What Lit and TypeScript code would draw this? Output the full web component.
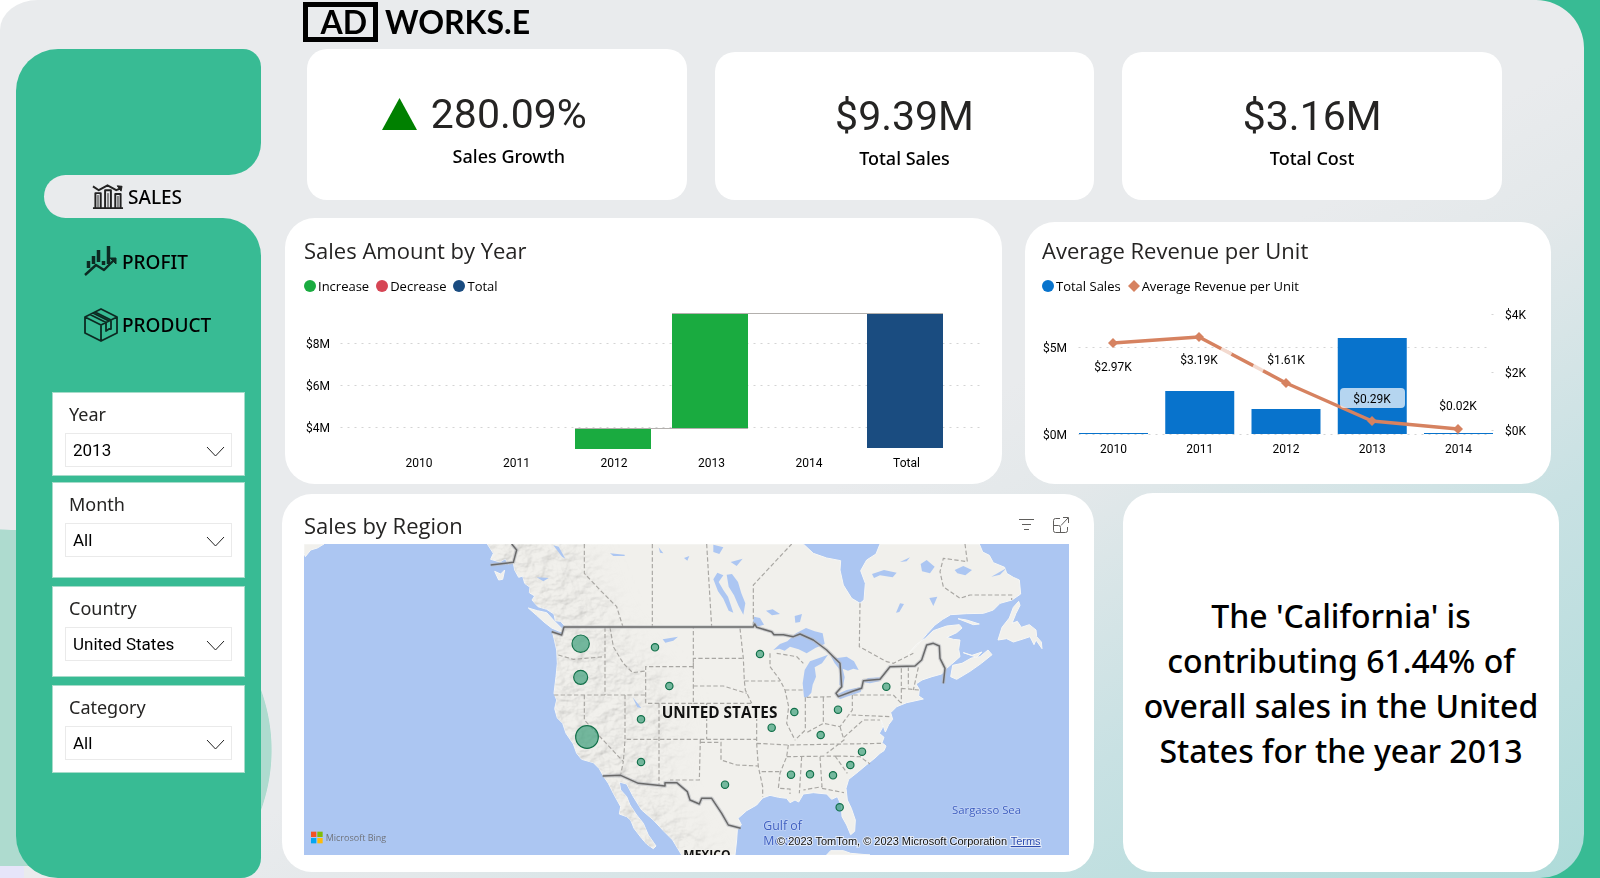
import { LitElement, html, svg, css } from "lit";
import { customElement } from "lit/decorators.js";
import { classMap } from "lit/directives/class-map.js";

type Filter = { id: string; label: string; size: string; options: string[] };

const FILTERS: Filter[] = [
  { id: "year", label: "Year", size: "compact", options: ["2013", "2010", "2011", "2012", "2014"] },
  { id: "month", label: "Month", size: "tall", options: ["All", "January", "February", "March"] },
  { id: "country", label: "Country", size: "regular", options: ["United States", "Canada", "France"] },
  { id: "category", label: "Category", size: "short", options: ["All", "Bikes", "Clothing"] },
];

const NAV_ICONS = {
  sales: svg`
    <path d="M1 25.500h31M3.500 25V10h5.500v15M13.500 25V7h6v18M24 25V11h5.500v14" stroke-width="2"/>
    <path d="M6.200 12v13M16.500 10v15M26.800 13v12" stroke-width="1"/>
    <path d="M1 3l6 4 9-5 9 5 5-2" stroke-width="2"/>
    <path d="M26 2.500l5 .500-1 5z" fill="#222" stroke-width="1"/>`,
  profit: svg`
    <path d="M4.500 16v7M9.500 11v8M14.500 5v12M19.500 16v4M24.500 1v18" stroke-width="3.500"/>
    <path d="M1 30l11-10 8 5 11-11" stroke-width="2.400"/>
    <path d="M26 13h6v6z" fill="#0c2a22" stroke-width="1"/>`,
  product: svg`
    <path d="M17 1l16 8v16l-16 8-16-8V9zM1 9l16 8 16-8M17 17v16M6 6.500l16 8M11 4l16 8M9 5l16 8" stroke-width="1.800"/>
    <path d="M22 15v8l3-2 2 0v-8.500" stroke-width="1.800"/>`,
};

const DOTS: [number, number, number][] = [
  [902, 461, 26], [902, 562, 21], [921, 741, 34], [1125, 472, 11], [1168, 588, 11],
  [1083, 688, 11], [1083, 816, 11], [1440, 492, 11], [1543, 666, 11], [1674, 659, 11],
  [1819, 590, 11], [1475, 713, 11], [1622, 735, 11], [1746, 785, 11], [1711, 825, 11],
  [1533, 854, 11], [1590, 853, 11], [1659, 856, 11], [1335, 884, 11], [1679, 952, 11],
];

const LAND =
  "M622 162L640 190L632 208L660 216L676 206L684 222L700 218L704 240L716 262L728 258L734 280L750 292L748 308L764 318L756 330L774 350L800 358L822 372L826 392L842 394L856 410L846 435L818 428L822 445L830 480L832 520L828 560L822 610L830 630L824 656L832 684L848 700L858 730L880 762L890 790L905 808L940 818L958 836L970 858L985 880L1000 910L1022 950L1018 972L1040 980L1052 990L1062 1015L1085 1045L1100 1062L1120 1076L1128 1068L1105 1035L1090 1000L1070 975L1050 945L1040 920L1022 900L1018 876L1040 882L1060 920L1085 960L1120 990L1150 1022L1178 1050L1205 1095H1365L1370 1050L1372 1020L1384 1004L1374 985L1400 962L1430 945L1448 924L1470 916L1496 922L1520 925L1530 938L1545 930L1556 936L1570 912L1600 908L1640 912L1655 928L1672 920L1684 946L1686 980L1700 1005L1712 1034L1724 1024L1726 990L1714 955L1702 930L1698 895L1706 868L1735 845L1760 824L1785 804L1800 790L1812 782L1818 768L1806 758L1812 742L1798 730L1808 712L1804 690L1816 726L1826 704L1838 688L1832 668L1850 650L1880 638L1930 627L1916 618L1918 598L1908 582L1926 570L1956 560L1985 552L2000 535L2015 522L2040 500L2036 478L2040 450L2020 448L2000 442L2030 428L2046 414L2038 404L2000 408L1960 422L1935 446L1910 462L1884 492L1912 466L1942 430L1964 406L1988 388L2012 374L2060 371L2110 370L2140 360L2160 340L2196 330L2222 312L2218 270L2200 262L2180 250L2174 232L2140 218L2128 196L2108 186L2098 162H1800L1788 192L1760 210L1742 242L1756 280L1752 330L1740 340L1715 325L1690 285L1680 240L1682 212L1640 204L1600 190L1570 162Z";

const ISLANDS =
  "M745 354L772 362L800 368L820 390L844 414L850 426L838 424L815 414L792 396L770 376ZM644 244L662 252L674 240L668 268L656 270ZM2216 334L2200 352L2188 384L2166 412L2154 450L2180 446L2200 456L2226 448L2250 440L2262 464L2268 450L2286 476L2284 456L2270 440L2268 420L2248 404L2224 412L2212 394L2196 400L2208 370L2220 346ZM2018 526L2046 520L2074 504L2100 500L2124 480L2136 494L2104 520L2070 544L2030 568L2012 560ZM2034 386L2060 390L2098 402L2080 404ZM2050 488L2076 496L2106 486L2090 502ZM1640 1095L1652 1082L1690 1082L1712 1090L1770 1095ZM72 162H132L112 174L92 180L76 200L72 190Z";

const LAKES =
  "M1480 480L1500 462L1522 454L1548 430L1578 414L1604 424L1628 430L1634 462L1606 474L1580 490L1556 478L1530 470L1514 482L1498 476ZM1572 622L1568 580L1574 540L1590 514L1628 500L1644 494L1626 520L1604 532L1608 560L1598 584L1594 608L1582 622ZM1652 498L1672 504L1700 500L1722 514L1736 540L1720 536L1704 542L1688 536L1694 562L1688 594L1678 584L1680 540L1664 520ZM1668 614L1700 600L1746 590L1742 606L1700 620L1680 628ZM1748 576L1764 564L1802 562L1798 574L1770 580ZM1300 268L1312 248L1330 256L1316 276L1330 300L1344 320L1360 368L1346 362L1330 326L1314 304ZM1340 254L1356 252L1374 276L1384 310L1396 340L1390 374L1376 348L1362 316L1346 290ZM1422 380L1440 384L1452 404L1430 410L1418 402ZM1300 164L1330 172L1318 192L1300 186ZM1352 216L1388 206L1370 228ZM1458 362L1478 358L1500 372L1476 376ZM1544 378L1566 372L1560 396L1546 398ZM1776 252L1812 240L1850 248L1838 262L1800 256L1782 264ZM1860 216L1890 202L1880 214ZM1922 222L1940 210L1964 230L1950 250L1926 244ZM2024 240L2050 228L2076 240L2056 256L2032 250ZM1848 368L1860 340L1872 342L1858 366ZM2134 260L2180 234L2160 254ZM1948 324L1972 320L1960 348ZM1058 622L1084 654L1072 652ZM990 190L1034 194L1034 198L1000 198ZM1212 204L1228 198L1222 212ZM820 166L836 170L856 206L846 200ZM770 262L806 264L790 274ZM1136 172L1150 190L1140 188ZM1148 448L1194 440L1180 452L1156 458Z";

const STATES =
  "M913 162V250L960 300L1010 350L1028 408M1117 162V410M1280 162L1295 410M1420 408V285L1535 162M1740 340L1738 470L1820 515L1840 520L1900 490M2055 162L2062 215L1990 205L1980 245L1990 290L2040 325L2070 315H2195V330M975 412V615M835 495L880 508L975 500M822 615H1097M1240 530H1097V640H1240V412M990 412L1000 470L1030 520L1058 548L1097 543M913 615V690L1030 815L1022 855M1035 615V750L1030 815M1137 640V885M1040 748H1430M1261 748L1258 870H1170M1262 757H1323V810L1370 825L1435 828M1240 530V505H1387M1240 588H1330L1400 610M1380 415L1390 505L1393 573L1396 600L1415 640M1240 640H1280V748M1280 640H1415M1430 660V760L1435 830L1448 890V920M1393 573H1500M1430 760L1525 765L1810 760M1445 845H1500M1525 765L1520 800L1500 850L1495 895L1530 897V912M1520 800L1670 798M1565 800L1558 910M1620 800L1626 890L1570 900M1626 895L1692 908M1665 798L1702 850M1470 490V530L1500 570L1515 600L1526 650L1520 700L1545 750M1515 600H1570M1576 622V720L1545 750M1630 622V700L1576 730M1580 622L1660 620M1717 615V660L1680 710L1630 700M1715 675L1832 680M1720 615H1840L1862 638M1864 535V640M1885 530V592M1915 532L1900 600M1864 595L1918 600M1680 710L1692 750L1640 790M1692 742L1750 690L1800 690M1490 490L1550 500L1570 520M1670 798L1740 800L1770 822";

const BORDER =
  "M815 425L845 435L852 411H1420L1424 402L1430 412L1475 425L1482 434L1510 434L1540 440L1560 432L1600 450L1640 480L1660 500L1680 520L1685 590L1668 610L1675 620L1720 603L1745 595L1750 572L1800 568L1830 530L1905 528L1925 510L1940 465L1960 460L1978 468L1980 505L1995 535L1990 580M968 858L1022 856L1075 880L1155 888V878H1190L1222 905L1230 930L1258 942L1265 925H1295L1325 970L1345 1005L1382 1015M632 225L700 217L710 180L695 162";

const BASE = css`
  :host { display: block; font-family: "Noto Sans", "Open Sans", sans-serif; color: #252423; }
  * { box-sizing: border-box; }
  h2 { margin: 0; font-family: "Open Sans", sans-serif; font-size: 22px; font-weight: 400; line-height: 28px; }
  svg { display: block; }
`;

@customElement("side-bar")
export class SideBar extends LitElement {
  static styles = [BASE, css`
    :host { display: flex; flex-direction: column; --green: #38bb94; }
    .cap { height: 126px; background: var(--green); border-radius: 42px 18px 32px 0; }
    .active { display: block; background: linear-gradient(to right, var(--green) 60px, transparent 60px); padding-left: 28px; }
    .panel { flex: 1; background: var(--green); border-radius: 0 38px 20px 42px; padding: 22px 16px 16px 36px; }
    .link { display: flex; align-items: center; color: #000; text-decoration: none; font-size: 19px; line-height: 44px; font-weight: 500; gap: 4px; height: 43px; }
    .link.on { background: #e9ebed; border-radius: 22px 0 0 22px; padding-left: 48px; }
    .inner { margin-left: 32px; margin-bottom: 20px; }
    .ico { fill: none; stroke: #0c2a22; stroke-linejoin: round; }
    .link.on .ico { stroke: #222; }
    .filters { display: flex; flex-direction: column; gap: 8px; margin-top: 46px; }
    .filter { background: #fff; border: 1px solid #a6dcca; padding: 7px 12px 8px; min-height: 91px; }
    .filter.compact { min-height: 84px; }
    .filter.short { min-height: 88px; }
    .filter.tall { min-height: 96px; margin-top: -2px; }
    .name { display: block; font-size: 18px; line-height: 28px; padding-left: 4px; margin-bottom: 5px; }
    .pick { position: relative; }
    .select { appearance: none; width: 100%; height: 34px; border: 1px solid #eaeaea; border-radius: 0; background: #fff; font-family: Roboto, sans-serif; font-size: 17px; color: #000; padding: 0 30px 0 7px; }
    .chev { position: absolute; right: 7px; top: 13px; pointer-events: none; fill: none; stroke: #222; }
  `];

  private link(id: keyof typeof NAV_ICONS, label: string, on: boolean) {
    return html`<a href="#${id}" class=${classMap({ link: true, on, inner: !on })}>
      <svg class="ico" width=${on ? 32 : 34} height=${on ? 27 : 34} viewBox=${on ? "0 0 33 27" : "0 0 34 34"}>${NAV_ICONS[id]}</svg>
      <span>${label}</span></a>`;
  }

  render() {
    return html`
      <div class="cap"></div>
      <div class="active">${this.link("sales", "SALES", true)}</div>
      <div class="panel">
        ${this.link("profit", "PROFIT", false)}
        ${this.link("product", "PRODUCT", false)}
        <div class="filters">
          ${FILTERS.map((f) => html`
            <div class="filter ${f.size}">
              <label class="name" for=${f.id}>${f.label}</label>
              <div class="pick">
                <select class="select" id=${f.id}>${f.options.map((o) => html`<option>${o}</option>`)}</select>
                <svg class="chev" width="19" height="11" viewBox="0 0 19 11"><path d="M1 1l8.500 9 8.500-9"/></svg>
              </div>
            </div>`)}
        </div>
      </div>`;
  }
}

const CHART = css`
  .legend { display: flex; gap: 7px; font-family: "Open Sans", sans-serif; font-size: 13px; line-height: 20px; margin: 12px 0 4px; color: #000; }
  .key { display: flex; align-items: center; gap: 2px; }
  .plot { width: 100%; height: auto; font: 12px Roboto, sans-serif; }
  .grid { stroke: #d4d4d4; stroke-dasharray: 1 6; stroke-linecap: square; }
`;

@customElement("waterfall-chart")
export class WaterfallChart extends LitElement {
  static styles = [BASE, CHART, css`
    .dot { width: 12px; height: 12px; border-radius: 50%; }
    .inc { background: #1aab40; } .dec { background: #d64554; } .tot { background: #1a4c80; }
  `];
  render() {
    const years = ["2010", "2011", "2012", "2013", "2014", "Total"];
    return html`
      <h2>Sales Amount by Year</h2>
      <div class="legend">
        <span class="key"><i class="dot inc"></i>Increase</span>
        <span class="key"><i class="dot dec"></i>Decrease</span>
        <span class="key"><i class="dot tot"></i>Total</span>
      </div>
      <svg class="plot" viewBox="304 300 681 175" role="img" aria-label="Sales Amount by Year">
        ${[8, 6, 4].map((v, i) => svg`
          <path class="grid" d="M341 ${343 + i * 42}.5H982"/>
          <text x="306" y=${348 + i * 42}>$${v}M</text>`)}
        <rect x="575" y="428" width="76" height="21" fill="#1aab40"/>
        <rect x="672" y="313" width="76" height="115" fill="#1aab40"/>
        <rect x="867" y="313" width="76" height="135" fill="#1a4c80"/>
        <path d="M575 428.500H748M672 313.500H943" stroke="#b3b0ad"/>
        ${years.map((y, i) => svg`<text x=${419 + i * 97.5} y="467" text-anchor="middle">${y}</text>`)}
      </svg>`;
  }
}

@customElement("revenue-chart")
export class RevenueChart extends LitElement {
  static styles = [BASE, CHART, css`
    .bar { fill: #0873cc; }
    .mid { text-anchor: middle; }
  `];
  render() {
    const tops = [433, 391, 409, 338, 433];
    const pts = [[1113, 343], [1199, 337], [1286, 383], [1372, 421], [1458, 429]];
    const labels: [string, number][] = [["$2.97K", 371], ["$3.19K", 364], ["$1.61K", 364], ["$0.29K", 403], ["$0.02K", 410]];
    return html`
      <h2>Average Revenue per Unit</h2>
      <div class="legend">
        <span class="key"><svg width="12" height="12"><circle cx="6" cy="6" r="6" fill="#0873cc"/></svg>Total Sales</span>
        <span class="key"><svg width="12" height="12"><path d="M6 0l6 6-6 6-6-6z" fill="#d68260"/></svg>Average Revenue per Unit</span>
      </div>
      <svg class="plot" viewBox="1042 300 492 175" role="img" aria-label="Average Revenue per Unit">
        <path class="grid" d="M1079 347.500H1492M1079 434.500H1492M1492 314.500h1M1492 372.500h1M1492 430.500h1"/>
        <text x="1043" y="352">$5M</text><text x="1043" y="439">$0M</text>
        <text x="1505" y="319">$4K</text><text x="1505" y="377">$2K</text><text x="1505" y="435">$0K</text>
        ${tops.map((t, i) => svg`<rect class="bar" x=${1079 + i * 86.25} y=${t} width="69" height=${434 - t}/>
          <text class="mid" x=${1113.5 + i * 86.25} y="453">201${i}</text>`)}
        <path d="M${pts.map((p) => p.join(" ")).join("L")}" fill="none" stroke="#d68260" stroke-width="3.500" stroke-linejoin="round"/>
        <path d="M1221 349l10 6M1253 366l10 5" stroke="#fff" stroke-opacity=".7" stroke-width="5"/>
        ${pts.map(([x, y]) => svg`<path d="M${x} ${y - 5}l5 5-5 5-5-5z" fill="#d68260"/>`)}
        <rect x="1340" y="388" width="65" height="20" rx="4" fill="#fff" fill-opacity=".7"/>
        ${labels.map(([t, y], i) => svg`<text class="mid" x=${pts[i][0]} y=${y}>${t}</text>`)}
      </svg>`;
  }
}

@customElement("region-map")
export class RegionMap extends LitElement {
  static styles = [BASE, css`
    .head { display: flex; justify-content: space-between; align-items: center; margin-bottom: 5px; }
    .tools { display: flex; gap: 18px; }
    .tool { border: 0; background: none; padding: 0; width: 16px; height: 16px; }
    .tool svg { fill: none; stroke: #605e5c; }
    .map { width: 100%; height: auto; }
    .relief { mix-blend-mode: multiply; }
    .country { font: 700 46px "Open Sans", sans-serif; fill: #111; stroke: #f1f0ec; stroke-width: 6px; paint-order: stroke; }
    .mexico { font-size: 36px; }
    .sea { font: 34px "Open Sans", sans-serif; fill: #3e5fc0; stroke: #c3d4f6; stroke-width: 4px; paint-order: stroke; }
    .gulf { font-size: 37px; }
    .brand { font: 27px "Open Sans", sans-serif; fill: #70737a; }
    .credit { font: 33px "Liberation Sans", sans-serif; fill: #111; stroke: #e6edf9; stroke-width: 6px; paint-order: stroke; }
    .terms { fill: #2c4cb0; text-decoration: underline; }
  `];
  render() {
    return html`
      <div class="head">
        <h2>Sales by Region</h2>
        <div class="tools">
          <button class="tool" aria-label="Filters"><svg width="16" height="16"><path d="M0 2.500h15M3 7.500h9M5 12.500h5"/></svg></button>
          <button class="tool" aria-label="Focus mode"><svg width="16" height="16"><path d="M7 1.500H2.500a2 2 0 0 0-2 2v10a2 2 0 0 0 2 2h10a2 2 0 0 0 2-2V10M.500 8.500h5a2 2 0 0 1 2 2v5M8 8.500L15 1M10 .500h5.500V6"/></svg></button>
        </div>
      </div>
      <svg class="map" viewBox="72 162 2295 933" role="img" aria-label="Map of sales by region">
        <defs>
          <filter id="relief" x="0" y="0" width="1" height="1">
            <feTurbulence type="fractalNoise" baseFrequency="0.022 0.030" numOctaves="5" seed="6"/>
            <feDiffuseLighting surfaceScale="14" lighting-color="#fff"><feDistantLight azimuth="225" elevation="60"/></feDiffuseLighting>
            <feComposite in2="SourceGraphic" operator="in"/>
          </filter>
          <filter id="soft"><feGaussianBlur stdDeviation="45"/></filter>
          <clipPath id="land"><path d=${LAND}/></clipPath>
          <mask id="west"><path d="M560 100H880L1000 380L1200 640L1150 900L1330 1150H880L760 700Z" fill="#fff" filter="url(#soft)"/></mask>
        </defs>
        <rect x="72" y="162" width="2295" height="933" fill="#acc6f2"/>
        <path d="${LAND}${ISLANDS}" fill="#f1f0ec" stroke="#f7f7f5" stroke-width="3" stroke-linejoin="round"/>
        <g class="relief" clip-path="url(#land)">
          <g mask="url(#west)"><rect x="600" y="162" width="800" height="933" filter="url(#relief)" opacity=".28"/></g>
        </g>
        <path d=${LAKES} fill="#acc6f2"/>
        <path d=${STATES} fill="none" stroke="#a9a7a3" stroke-width="3.500" stroke-dasharray="13 7"/>
        <path d=${BORDER} fill="none" stroke="#b9bbc0" stroke-width="11" stroke-linejoin="round" opacity=".6"/>
        <path d=${BORDER} fill="none" stroke="#696969" stroke-width="4.500" stroke-linejoin="round"/>
        <text class="country" x="1145" y="684">UNITED STATES</text>
        <text class="country mexico" x="1210" y="1106">MEXICO</text>
        <text class="sea" x="2016" y="972">Sargasso Sea</text>
        <text class="sea gulf" x="1450" y="1020">Gulf of</text>
        <text class="sea gulf" x="1450" y="1064">Mexico</text>
        ${DOTS.map(([x, y, r]) => svg`<circle cx=${x} cy=${y} r=${r} fill="#3f9f7c" fill-opacity=".7" stroke="#12704a" stroke-width="3.500"/>`)}
        <path d="M93 1025h16v16H93z" fill="#f35325"/><path d="M112 1025h16v16h-16z" fill="#81bc06"/>
        <path d="M93 1044h16v16H93z" fill="#05a6f0"/><path d="M112 1044h16v16h-16z" fill="#ffba08"/>
        <text class="brand" x="137" y="1053">Microsoft Bing</text>
        <text class="credit" x="1491" y="1065">© 2023 TomTom, © 2023 Microsoft Corporation</text>
        <a href="#terms"><text class="credit terms" x="2192" y="1065">Terms</text></a>
      </svg>`;
  }
}

@customElement("app-root")
export class AppRoot extends LitElement {
  static styles = [BASE, css`
    :host { background: linear-gradient(to right, #fff 50%, #38bb94 50%); }
    .shell {
      display: flex; gap: 21px; min-height: 100vh; margin-right: 16px; padding-left: 16px;
      border-radius: 38px 48px 44px 0 / 30px 48px 44px 0;
      background:
        radial-gradient(ellipse 280px 221px at -8px 750px, #aedbcf 99.7%, transparent 100%) 0 0 / 300px 866px no-repeat,
        linear-gradient(#e6e5fa, #e6e5fa) 0 866px / 24px 100% no-repeat,
        linear-gradient(150deg, #e9ebed 54%, #e3e8ea 62%, #c8e1e3 78%, #aedbd9 100%);
    }
    .side { flex: none; width: 245px; margin-top: 49px; }
    .main { flex: 1; min-width: 0; }
    .logo { display: flex; align-items: flex-start; gap: 7px; margin: 0 0 0 21px; padding-top: 2px; height: 49px; font: 700 32px Lato, "Open Sans", sans-serif; line-height: 40px; color: #000; }
    .box { border: 5px solid #000; width: 75px; height: 40px; line-height: 30px; text-align: right; padding-right: 6px; }
    .row { display: grid; align-items: end; }
    .card { background: #fff; border-radius: 30px; min-width: 0; }
    .kpis { grid-template-columns: 1fr 1fr 1fr; gap: 28px; margin: 0 82px 18px 25px; }
    .kpi { min-height: 148px; border-radius: 20px; padding-top: 40px; display: flex; flex-direction: column; align-items: center; gap: 6px; }
    .growth { min-height: 151px; padding: 41px 25px 0 0; }
    .value { font: 41px Roboto, sans-serif; line-height: 48px; }
    .label { font-size: 18px; font-weight: 500; line-height: 24px; color: #000; }
    .pair { display: grid; grid-template-columns: auto auto; column-gap: 14px; row-gap: 6px; align-items: center; justify-items: center; }
    .pair .label { grid-column: 2; }
    .charts { grid-template-columns: 717fr 526fr; gap: 23px; margin: 0 33px 10px 3px; }
    .waterfall { padding: 18px 17px 9px 19px; }
    .revenue { padding: 14px 17px 9px 17px; }
    .bottom { grid-template-columns: 812fr 436fr; gap: 29px; margin: 0 25px 6px 0; align-items: stretch; }
    .region { padding: 17px 25px 17px 22px; }
    .insight { padding: 0 16px; display: flex; align-items: center; margin-top: -1px; }
    .insight p { margin: 0; flex: 1; text-align: center; font-size: 32px; font-weight: 500; line-height: 45px; color: #000; }
  `];

  render() {
    return html`
      <div class="shell">
        <side-bar class="side"></side-bar>
        <main class="main">
          <h1 class="logo"><span class="box">AD</span><span>WORKS.E</span></h1>
          <section class="row kpis">
            <div class="card kpi growth">
              <div class="pair">
                <svg width="35" height="32" viewBox="0 0 35 32"><path d="M17.500 0L35 32H0z" fill="#008000"/></svg>
                <span class="value">280.09%</span>
                <span class="label">Sales Growth</span>
              </div>
            </div>
            <div class="card kpi"><span class="value">$9.39M</span><span class="label">Total Sales</span></div>
            <div class="card kpi"><span class="value">$3.16M</span><span class="label">Total Cost</span></div>
          </section>
          <section class="row charts">
            <waterfall-chart class="card waterfall"></waterfall-chart>
            <revenue-chart class="card revenue"></revenue-chart>
          </section>
          <section class="row bottom">
            <region-map class="card region"></region-map>
            <div class="card insight"><p>The 'California' is contributing 61.44% of overall sales in the United States for the year 2013</p></div>
          </section>
        </main>
      </div>`;
  }
}
